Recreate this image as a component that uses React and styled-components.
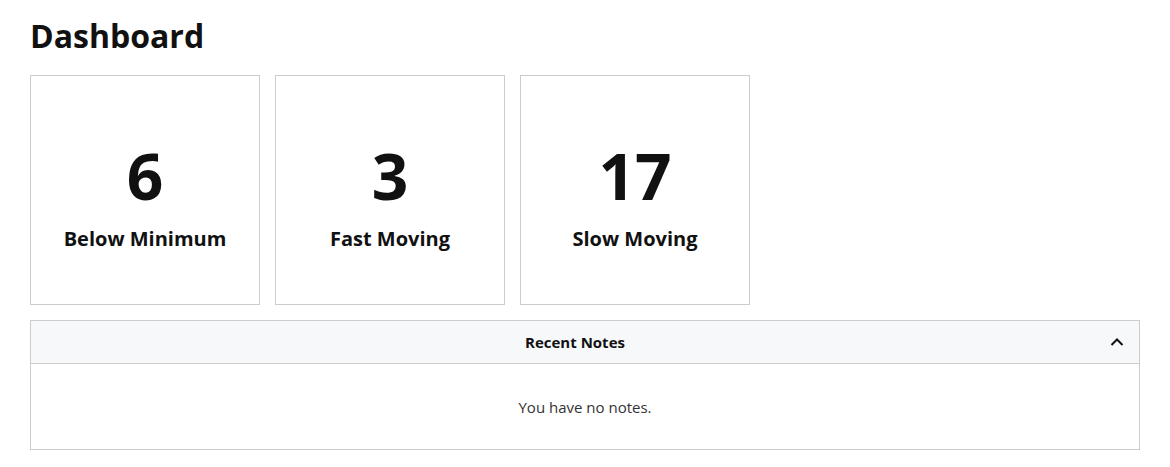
import React, { useState } from 'react'
import styled, { createGlobalStyle } from 'styled-components'

const GlobalStyle = createGlobalStyle`
  body {
    margin: 0;
    background: #fff;
    font-family: "Open Sans", "Noto Sans", sans-serif;
    color: #111;
  }
`

const Page = styled.div`
  padding: 14px 30px 16px;
`

const Title = styled.h1`
  margin: 0 0 17px;
  font-size: 32px;
  font-weight: 700;
  line-height: 44px;
  color: #111;
`

const StatRow = styled.div`
  display: flex;
  gap: 15px;
  margin-bottom: 15px;
`

const StatCard = styled.div`
  width: 230px;
  height: 230px;
  box-sizing: border-box;
  border: 1px solid #cccccc;
  display: flex;
  flex-direction: column;
  align-items: center;
  justify-content: center;
  padding-top: 16px;
`

const StatValue = styled.div`
  font-size: 64px;
  font-weight: 700;
  line-height: 64px;
`

const StatLabel = styled.div`
  margin-top: 17px;
  font-size: 20px;
  font-weight: 700;
  line-height: 28px;
`

const Panel = styled.section`
  border: 1px solid #cccccc;
`

const PanelHeader = styled.button`
  all: unset;
  box-sizing: border-box;
  width: 100%;
  height: 43px;
  display: flex;
  align-items: center;
  padding: 0 14px 0 10px;
  background: #f7f8fa;
  border-bottom: ${p => (p.open ? '1px solid #cccccc' : 'none')};
  font-size: 15px;
  font-weight: 700;
  cursor: pointer;
`

const PanelTitle = styled.span`
  flex: 1;
  text-align: center;
`

const Chevron = styled.svg`
  flex: none;
  transform: ${p => (p.open ? 'none' : 'rotate(180deg)')};
`

const PanelBody = styled.div`
  height: 85px;
  display: flex;
  align-items: center;
  justify-content: center;
  font-size: 15px;
  color: #333;
`

const stats = [
  { value: 6, label: 'Below Minimum' },
  { value: 3, label: 'Fast Moving' },
  { value: 17, label: 'Slow Moving' }
]

export default function App () {
  const [open, setOpen] = useState(true)

  return (
    <Page>
      <GlobalStyle />
      <Title>Dashboard</Title>
      <StatRow>
        {stats.map(s => (
          <StatCard key={s.label}>
            <StatValue>{s.value}</StatValue>
            <StatLabel>{s.label}</StatLabel>
          </StatCard>
        ))}
      </StatRow>
      <Panel>
        <PanelHeader open={open} onClick={() => setOpen(!open)}>
          <PanelTitle>Recent Notes</PanelTitle>
          <Chevron open={open} width="16" height="16" viewBox="0 0 16 16" fill="none">
            <path d="M2.5 11 L8 5.5 L13.5 11" stroke="#111" strokeWidth="2" />
          </Chevron>
        </PanelHeader>
        {open && <PanelBody>You have no notes.</PanelBody>}
      </Panel>
    </Page>
  )
}
